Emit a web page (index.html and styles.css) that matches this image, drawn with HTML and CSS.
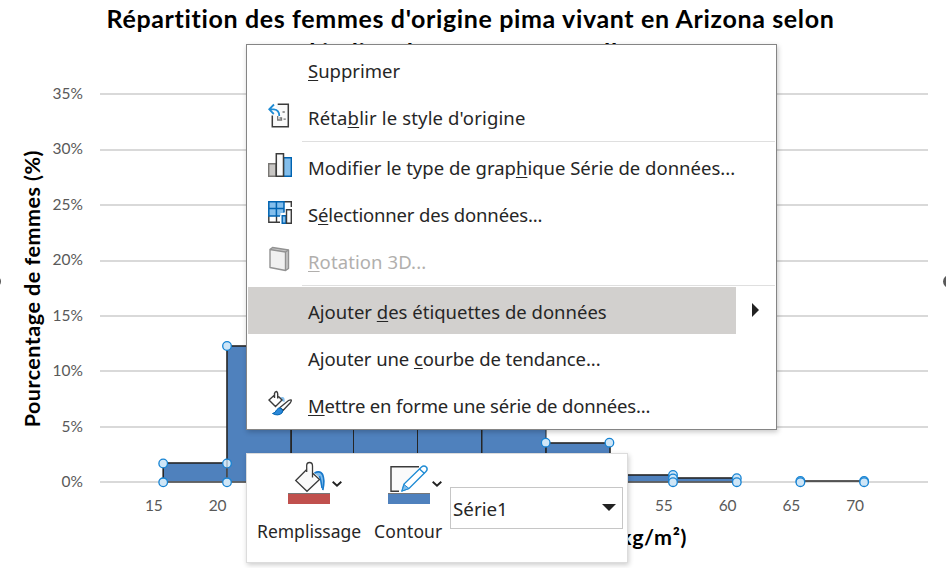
FILE: index.html
```html
<!DOCTYPE html>
<html lang="fr">
<head>
<meta charset="utf-8">
<title>Histogramme</title>
<link rel="stylesheet" href="styles.css">
</head>
<body>
<main class="chart">
  <h1 class="title">Répartition des femmes d'origine pima vivant en Arizona selon<br>l'indice de masse corporelle</h1>
  <div class="body">
    <div class="y-title"><span>Pourcentage de femmes (%)</span></div>
    <div class="y-axis"><span>35%</span><span>30%</span><span>25%</span><span>20%</span><span>15%</span><span>10%</span><span>5%</span><span>0%</span></div>
    <svg class="plot" width="846" height="420" viewBox="100 75 846 420">
      <g fill="#d9d9d9">
        <rect x="100" y="93" width="828" height="2"/><rect x="100" y="149" width="828" height="2"/><rect x="100" y="204" width="828" height="2"/><rect x="100" y="260" width="828" height="2"/><rect x="100" y="315" width="828" height="2"/><rect x="100" y="370" width="828" height="2"/><rect x="100" y="426" width="828" height="2"/><rect x="100" y="481" width="828" height="2"/>
      </g>
      <g fill="#4f81bd" stroke="#262626" stroke-width="1.6">
        <rect x="163.2" y="463" width="63.8" height="19"/>
        <rect x="227" y="346" width="64" height="136"/>
        <rect x="291.500" y="300" width="62" height="182" stroke-width="1"/>
        <rect x="353.500" y="260" width="64" height="222" stroke-width="1"/>
        <rect x="417.500" y="290" width="64" height="192" stroke-width="1"/>
        <rect x="482" y="380" width="64" height="102" stroke-width="1"/>
        <rect x="546" y="443" width="64" height="39"/>
        <rect x="610" y="475" width="63" height="7"/>
        <rect x="673" y="478" width="64" height="4"/>
        <path d="M800.5 481H864"/>
      </g>
      <path d="M163 482H737" stroke="#8a8a8a" stroke-width="1.2"/>
      <g fill="#cfe6f7" stroke="#1683d3" stroke-width="1.3">
        <circle cx="163.2" cy="463.5" r="4.3"/><circle cx="163.2" cy="482.3" r="4.3"/>
        <circle cx="227" cy="346" r="4.3"/><circle cx="227" cy="463.5" r="4.3"/><circle cx="227" cy="482.3" r="4.3"/>
        <circle cx="545.7" cy="442.7" r="4.3"/><circle cx="609.4" cy="442.7" r="4.3"/>
        <circle cx="673" cy="475" r="4.3"/><circle cx="673" cy="478.5" r="4.3"/><circle cx="673" cy="482.2" r="4.3"/>
        <circle cx="736.8" cy="478.2" r="4.3"/><circle cx="736.8" cy="482.2" r="4.3"/>
        <circle cx="800.4" cy="481" r="4.3"/><circle cx="800.4" cy="482.2" r="4.3"/>
        <circle cx="864.1" cy="481" r="4.3"/><circle cx="864.1" cy="482.2" r="4.3"/>
      </g>
      <path d="M227 460v18" stroke="#7c8993" stroke-width="1.4" opacity=".55"/>
      <circle cx="949.5" cy="281.5" r="6.5" fill="#595959"/>
    </svg>
  </div>
  <div class="x-axis"><span>15</span><span>20</span><span>25</span><span>30</span><span>35</span><span>40</span><span>45</span><span>50</span><span>55</span><span>60</span><span>65</span><span>70</span></div>
  <div class="x-title">Indice de masse corporelle (kg/m²)</div>
  <i class="grip"></i>
</main>

<nav class="menu">
  <div class="item"><span class="icon"></span><span class="label l1"><u>S</u>upprimer</span></div>
  <div class="item">
    <svg class="icon" viewBox="0 0 24 26" fill="none"><path d="M4.500 12.500L9 3V2.200H20.500V24.500H4.500z" fill="#fafafa"/><path d="M9.700 2.200H20.300V24.700H4.300V13.500" stroke="#3b3b3b" stroke-width="1.500"/><path d="M14.500 10h2.300M15.500 17.200h2.300M9.700 14v4h3.800v-2h-2" stroke="#777" stroke-width="1.300"/><path d="M6 2.500L1.200 7.300L5.800 12M1.500 7.300H6Q11.300 7.800 11.300 14" stroke="#fff" stroke-width="3"/><path d="M6 2.500L1.200 7.300L5.800 12M1.500 7.300H6Q11.300 7.800 11.300 14" stroke="#1e8bd4" stroke-width="1.8"/></svg>
    <span class="label l2">Réta<u>b</u>lir le style d'origine</span></div>
  <hr>
  <div class="item">
    <svg class="icon" viewBox="0 0 24 26"><path d="M.7 11.700H8V24.300H.7z" fill="#c8c6c4" stroke="#797774" stroke-width="1.4"/><path d="M15.500 5.700H23.300V24.300H15.500z" fill="#83beec" stroke="#0063b1" stroke-width="1.4"/><path d="M8.300 1.700H15.500V24.300H8.300z" fill="#fafafa" stroke="#3b3b3b" stroke-width="1.500"/></svg>
    <span class="label l3">Modifier le type de grap<u>h</u>ique Série de données...</span></div>
  <div class="item">
    <svg class="icon" viewBox="0 0 24 26"><path d="M.8 17V23.300H12M8.500 17v6M16 2.700H23.300V8" fill="none" stroke="#3b3b3b" stroke-width="1.4"/><path d="M.8 2.700H16V14H12.500V17H.8z" fill="#83beec"/><path d="M12 17H.8V2.700H16V13.500M8.400 2.700V17M.8 9.500H16" fill="none" stroke="#0063b1" stroke-width="1.500"/><path d="M14.200 16.800H18V24.300H14.200z" fill="#83beec" stroke="#0063b1" stroke-width="1.4"/><path d="M18.500 10.700H23.300V24.300H18.500z" fill="#fafafa" stroke="#3b3b3b" stroke-width="1.4"/></svg>
    <span class="label l4">S<u>é</u>lectionner des données...</span></div>
  <div class="item off">
    <svg class="icon" viewBox="0 0 24 26" stroke="#929292" stroke-width="1.4" stroke-linejoin="round"><path d="M2 3.500L4.500 1.500L20.500 4V22.500L17.500 24.500" fill="#c8c8c8"/><path d="M2 3.500L17.500 6V24.500L2 21.500z" fill="#f0f0f0"/><path d="M17.500 6L20.500 4" fill="none"/></svg>
    <span class="label l5"><u>R</u>otation 3D...</span></div>
  <hr>
  <div class="item active"><span class="icon"></span><span class="label l6">Ajouter <u>d</u>es étiquettes de données</span><b class="sub"></b></div>
  <div class="item"><span class="icon"></span><span class="label l7">Ajouter une <u>c</u>ourbe de tendance...</span></div>
  <div class="item">
    <svg class="icon" viewBox="0 0 24 26" fill="none"><path d="M12 7.500Q17.500 5.500 16.500 12L14 11z" fill="#83beec"/><path d="M6 5.500L1 10L7.500 16.500L14 10L10.500 6.500M6.500 8V3.500Q7 1.500 8.500 1.500Q9.700 2 9.700 4V8.500" stroke="#3b3b3b" stroke-width="1.4"/><path d="M12 17.500L20.500 10.500Q22.500 9.500 23.300 10Q23.500 11 22.500 12.500L15 20.500z" fill="#fff" stroke="#3b3b3b" stroke-width="1.3"/><path d="M4.500 23.500Q7.500 23 8.500 20Q10.500 17 13 18.200Q16 20.500 14 23Q10 26.500 4.500 23.500z" fill="#2b88d8" stroke="#0063b1"/></svg>
    <span class="label l8"><u>M</u>ettre en forme une série de données...</span></div>
</nav>

<section class="toolbar">
  <div class="tool fill">
    <div class="face">
      <div class="glyph">
        <svg width="42" height="32" viewBox="288 461 42 32" fill="none"><path d="M308.500 467L295.700 480.500L307.500 491.500L318.700 480.500L312.500 474" fill="#fafafa"/><path d="M314 473Q319.500 469 323 474Q325.500 479 323 490.500Q320.500 488 320.500 481Q319.500 476 314 473z" fill="#83beec"/><path d="M314.500 473Q320 470 322.500 474.500Q325 480 322.800 490" stroke="#1979ca" stroke-width="1.7"/><path d="M319.500 476Q321 480 322 488" stroke="#1979ca" stroke-width="1.500"/><path d="M306.700 469.500L295.700 480.500L307 491.300L319.500 479.500L312.500 473M306.700 472V465Q307 462.500 309.500 462.500Q312.500 462.500 312.500 466V477.500" stroke="#3b3b3b" stroke-width="1.3"/></svg>
        <i class="swatch red"></i>
      </div>
      <svg class="chev" width="12" height="8" viewBox="0 0 12 8"><path d="M1.700 1.700L6 5.700L10.300 1.700" fill="none" stroke="#222" stroke-width="1.900"/></svg>
    </div>
    <span class="caption c1">Remplissage</span>
  </div>
  <div class="tool line">
    <div class="face">
      <div class="glyph">
        <svg width="42" height="32" viewBox="388 461 42 32" fill="none"><path d="M392 467.500H418.500L403 484V491H391.500z" fill="#fafafa"/><path d="M419 466.700H391V491.300H399" stroke="#3b3b3b" stroke-width="1.4"/><path d="M402 491L404 484L421.500 467Q424 465 426.500 467.200Q428 469.500 426 471.500L409 488.500z" fill="#fff" stroke="#1e8bd4" stroke-width="1.400"/><path d="M402 491L404 484.500L409 488.500z" fill="#83beec" stroke="#1e8bd4"/><path d="M419.500 469L424.500 473.500" stroke="#1e8bd4" stroke-width="1.4"/></svg>
        <i class="swatch blue"></i>
      </div>
      <svg class="chev" width="12" height="8" viewBox="0 0 12 8"><path d="M1.700 1.700L6 5.700L10.300 1.700" fill="none" stroke="#222" stroke-width="1.900"/></svg>
    </div>
    <span class="caption c2">Contour</span>
  </div>
  <div class="select"><span>Série1</span><i class="caret"></i></div>
</section>
</body>
</html>
```
FILE: styles.css
```css
* { box-sizing: border-box; }
body { margin: 0; width: 946px; height: 568px; overflow: hidden; position: relative; background: #fff; font-family: "Noto Sans", "Open Sans", sans-serif; }

.chart { position: relative; width: 946px; height: 568px; overflow: hidden; font-family: Lato, sans-serif; }
.title { margin: 0; padding-top: 1px; height: 75px; width: 941px; text-align: center; font-size: 25px; line-height: 34px; font-weight: 700; letter-spacing: .64px; color: #000; white-space: nowrap; }
.body { display: grid; grid-template-columns: 46px 37px 17px 846px; height: 420px; }
.y-title { display: flex; align-items: center; justify-content: center; padding-left: 18px; padding-top: 7px; }
.y-title span { writing-mode: vertical-rl; transform: rotate(180deg); font-size: 21.500px; line-height: 28px; font-weight: 700; letter-spacing: .5px; white-space: nowrap; }
.y-axis { display: flex; flex-direction: column; justify-content: space-between; padding: 9px 0 4px; text-align: right; font-size: 15.500px; line-height: 19px; color: #595959; }
.plot { grid-column: 4; display: block; }
.x-axis { display: flex; margin-left: 122px; height: 21px; font-size: 15.500px; line-height: 21px; color: #595959; }
.x-axis span { flex: 0 0 63.750px; text-align: center; }
.x-title { margin-top: 7px; width: 687px; text-align: right; font-size: 21.500px; line-height: 28px; font-weight: 700; letter-spacing: .6px; white-space: nowrap; }
.grip { position: absolute; left: -10px; top: 276px; width: 11px; height: 11px; border-radius: 50%; background: #595959; }

.menu { position: absolute; left: 246px; top: 44px; width: 531px; height: 386px; padding: 1px; background: #fff; border: 1px solid #858585; box-shadow: 1px 2px 5px rgba(0,0,0,.22); }
.item { display: flex; align-items: center; height: 47px; padding-left: 20px; color: #262626; }
.icon { flex: none; width: 24px; height: 26px; margin-right: 16px; transform: translateY(-2px); }
.label { font-size: 18.500px; line-height: 30px; padding-top: 3px; white-space: nowrap; }
.label u { text-decoration-thickness: 1px; text-underline-offset: 2px; text-decoration-skip-ink: none; }
.l2 { letter-spacing: .15px; }
.l4 { letter-spacing: -.16px; }
.l5 { letter-spacing: .1px; }
.l7 { letter-spacing: -.08px; }
.l8 { letter-spacing: -.18px; }
.off { color: #b1afad; }
.active { position: relative; width: 488px; background: #d2d0ce; }
.sub { position: absolute; left: 504px; top: 16px; border-left: 7px solid #222; border-top: 7px solid transparent; border-bottom: 7px solid transparent; }
.menu hr { margin: 1px 0 1px 54px; border: 0; height: 1px; background: #dfdfdf; }

.toolbar { position: absolute; left: 246px; top: 453px; width: 382px; height: 110px; display: flex; background: #fff; border: 1px solid #dcdcdc; box-shadow: 1px 2px 5px rgba(0,0,0,.2); color: #262626; }
.tool { display: flex; flex-direction: column; padding-top: 7px; }
.fill { width: 127px; padding-left: 10px; }
.line { width: 76px; }
.face { display: flex; }
.fill .face { padding-left: 31px; }
.line .face { padding-left: 14px; }
.glyph { width: 42px; }
.glyph svg { display: block; }
.swatch { display: block; height: 11px; border-top: 1px solid #777; }
.red { background: #c0504d; }
.blue { background: #4f81bd; }
.chev { margin: 19px 0 0 1px; }
.caption { margin-top: 13px; font-size: 17.500px; line-height: 28px; white-space: nowrap; }
.c2 { letter-spacing: .15px; }
.select { margin-top: 33px; width: 173px; height: 42px; border: 1px solid #c6c6c6; display: flex; align-items: center; justify-content: space-between; padding: 1px 6px 0 2px; font-size: 18.800px; }
.caret { border-top: 7px solid #222; border-left: 7px solid transparent; border-right: 7px solid transparent; margin-bottom: 2px; }
```
